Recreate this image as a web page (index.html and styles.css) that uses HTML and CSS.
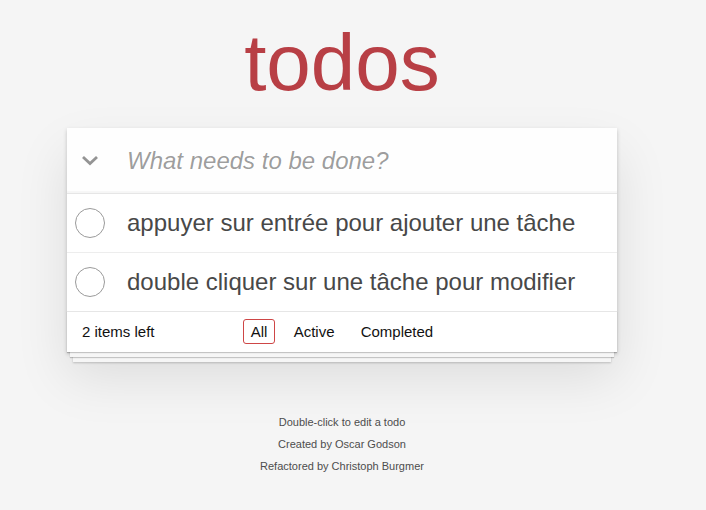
FILE: index.html
```html
<!DOCTYPE html>
<html lang="fr">
<head>
<meta charset="utf-8">
<title>todos</title>
<link rel="stylesheet" href="styles.css">
</head>
<body>
<div class="page">
  <h1 class="title">todos</h1>
  <section class="todoapp">
    <header class="header">
      <label class="toggle-all" aria-label="Mark all as complete">
        <svg width="18" height="11" viewBox="0 0 18 11"><polyline points="2,2 9,8.5 16,2" fill="none" stroke="#949494" stroke-width="2.8" stroke-linecap="butt" stroke-linejoin="miter"/></svg>
      </label>
      <input class="new-todo" placeholder="What needs to be done?">
    </header>
    <ul class="todo-list">
      <li class="todo">
        <span class="toggle"><svg width="30" height="30" viewBox="0 0 30 30"><circle cx="15" cy="15" r="14.5" fill="none" stroke="#9a9a9a" stroke-width="1"/></svg></span>
        <label class="todo-label">appuyer sur entrée pour ajouter une tâche</label>
      </li>
      <li class="todo">
        <span class="toggle"><svg width="30" height="30" viewBox="0 0 30 30"><circle cx="15" cy="15" r="14.5" fill="none" stroke="#9a9a9a" stroke-width="1"/></svg></span>
        <label class="todo-label">double cliquer sur une tâche pour modifier</label>
      </li>
    </ul>
    <footer class="footer">
      <span class="todo-count">2 items left</span>
      <ul class="filters">
        <li><a class="selected" href="#/">All</a></li>
        <li><a href="#/active">Active</a></li>
        <li><a href="#/completed">Completed</a></li>
      </ul>
      <span class="footer-spacer"></span>
    </footer>
  </section>
  <footer class="info">
    <p>Double-click to edit a todo</p>
    <p>Created by Oscar Godson</p>
    <p>Refactored by Christoph Burgmer</p>
  </footer>
</div>
</body>
</html>
```
FILE: styles.css
```css
html, body {
  margin: 0;
  padding: 0;
}

body {
  font: 14px "Liberation Sans", Arial, sans-serif;
  line-height: 1.4em;
  background: #f5f5f5;
  color: #111111;
}

.page {
  width: 550px;
  margin-left: 67px;
}

.title {
  margin: 23px 0 25px;
  font-size: 80px;
  line-height: 80px;
  font-weight: normal;
  text-align: center;
  color: #b83f45;
}

.todoapp {
  background: #fff;
  margin: 0 0 40px 0;
  box-shadow: 0 2px 4px 0 rgba(0, 0, 0, 0.2), 0 25px 50px 0 rgba(0, 0, 0, 0.1);
}

.header {
  display: flex;
  height: 65px;
  background: rgba(0, 0, 0, 0.003);
  box-shadow: inset 0 -2px 1px rgba(0, 0, 0, 0.03);
}

.toggle-all {
  width: 45px;
  flex: none;
  display: flex;
  align-items: center;
  justify-content: center;
}

.toggle-all svg {
  display: block;
  margin-left: 1px;
}

.new-todo {
  flex: 1;
  min-width: 0;
  margin: 0;
  padding: 16px 16px 16px 15px;
  border: none;
  background: transparent;
  font-family: inherit;
  font-size: 24px;
  line-height: 1.4em;
  color: #111;
  outline: none;
}

.new-todo::placeholder {
  font-style: italic;
  font-weight: 400;
  color: rgba(0, 0, 0, 0.4);
}

.todo-list {
  margin: 0;
  padding: 0;
  list-style: none;
  border-top: 1px solid #e6e6e6;
}

.todo {
  display: flex;
  align-items: center;
  font-size: 24px;
  border-bottom: 1px solid #ededed;
}

.todo:last-child {
  border-bottom: none;
}

.toggle {
  flex: none;
  width: 30px;
  height: 30px;
  margin-left: 8px;
}

.toggle svg {
  display: block;
}

.todo-label {
  flex: 1;
  display: block;
  padding: 15px 15px 15px 22px;
  line-height: 28px;
  font-weight: 400;
  color: #484848;
}

.footer {
  display: grid;
  grid-template-columns: 1fr auto 1fr;
  align-items: center;
  padding: 10px 15px;
  height: 20px;
  font-size: 15px;
  line-height: 19.6px;
  border-top: 1px solid #e6e6e6;
  box-shadow: 0 1px 1px rgba(0, 0, 0, 0.2),
              0 8px 0 -3px #f6f6f6,
              0 9px 1px -3px rgba(0, 0, 0, 0.2),
              0 16px 0 -6px #f6f6f6,
              0 17px 2px -6px rgba(0, 0, 0, 0.2);
}

.todo-count {
  text-align: left;
}

.filters {
  margin: 0;
  padding: 0;
  list-style: none;
  white-space: nowrap;
}

.filters li {
  display: inline;
}

.filters a {
  color: inherit;
  margin: 3px;
  padding: 3px 7px;
  text-decoration: none;
  border: 1px solid transparent;
  border-radius: 3px;
}

.filters a.selected {
  border-color: #ce4646;
}

.info {
  margin: 65px auto 0;
  color: #4d4d4d;
  font-size: 11px;
  text-align: center;
}

.info p {
  line-height: 1;
  margin: 11px 0;
}
```
